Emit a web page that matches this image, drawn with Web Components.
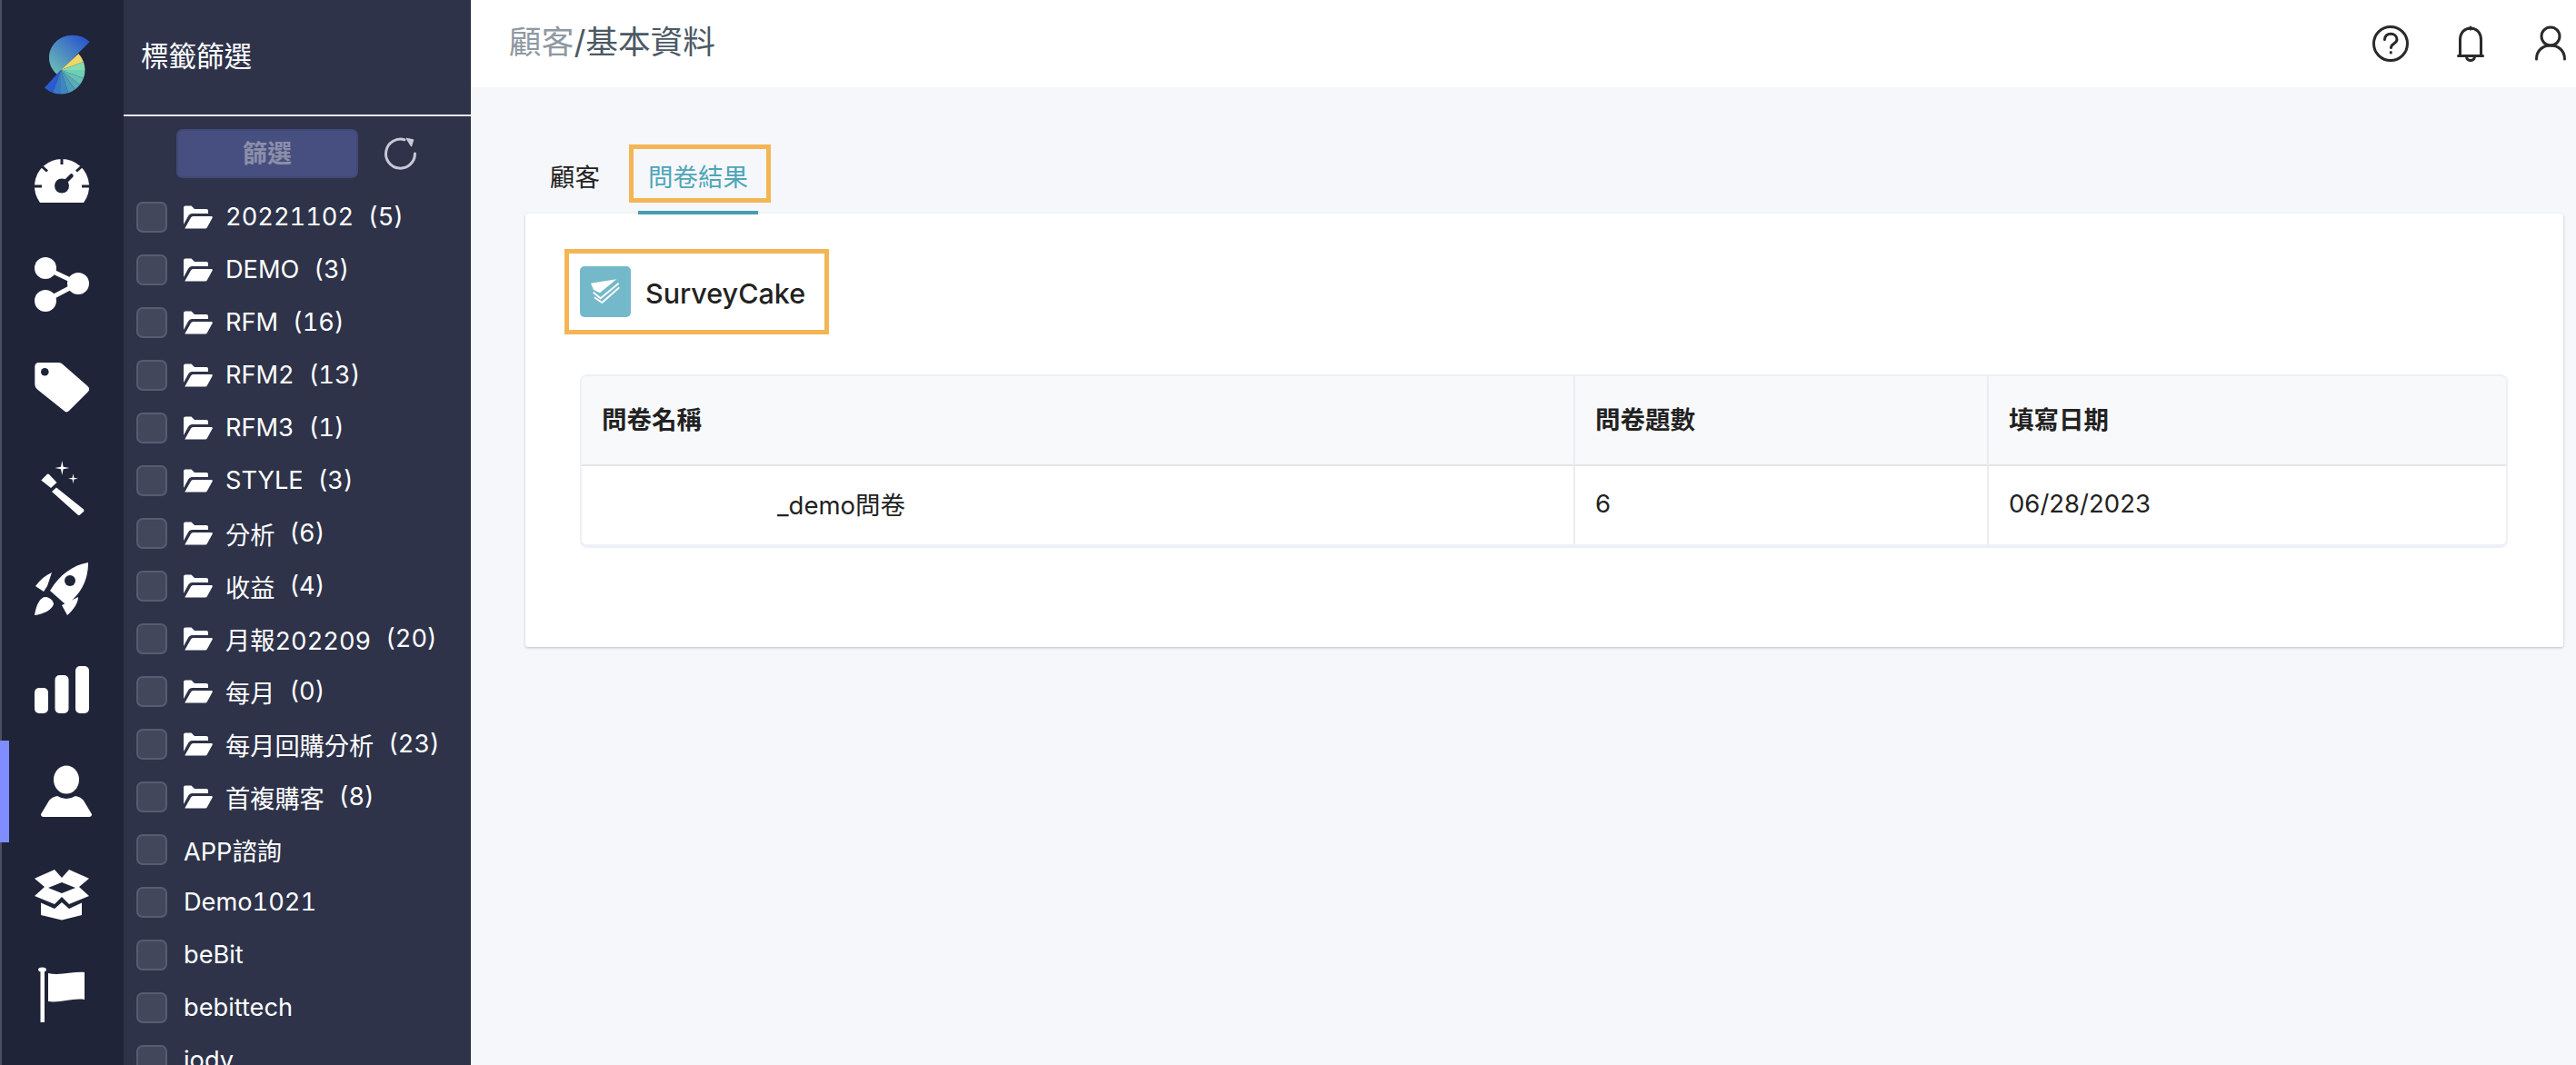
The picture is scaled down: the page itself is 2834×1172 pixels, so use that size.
<!DOCTYPE html>
<html lang="zh-Hant"><head><meta charset="utf-8"><title>基本資料</title>
<style>
html,body{margin:0;height:100%;overflow:hidden}
body{font-family:Inter,"Noto Sans CJK TC",sans-serif;color:#222}
</style></head><body>
<app-shell>
  <side-rail slot="rail">
    <rail-item icon="gauge"></rail-item>
    <rail-item icon="share"></rail-item>
    <rail-item icon="tag"></rail-item>
    <rail-item icon="wand"></rail-item>
    <rail-item icon="rocket"></rail-item>
    <rail-item icon="bars"></rail-item>
    <rail-item icon="user" active></rail-item>
    <rail-item icon="box"></rail-item>
    <rail-item icon="flag"></rail-item>
  </side-rail>
  <tag-panel slot="panel">
    <tag-row folder count="5">20221102</tag-row>
    <tag-row folder count="3">DEMO</tag-row>
    <tag-row folder count="16">RFM</tag-row>
    <tag-row folder count="13">RFM2</tag-row>
    <tag-row folder count="1">RFM3</tag-row>
    <tag-row folder count="3">STYLE</tag-row>
    <tag-row folder count="6">分析</tag-row>
    <tag-row folder count="4">收益</tag-row>
    <tag-row folder count="20">月報202209</tag-row>
    <tag-row folder count="0">每月</tag-row>
    <tag-row folder count="23">每月回購分析</tag-row>
    <tag-row folder count="8">首複購客</tag-row>
    <tag-row>APP諮詢</tag-row>
    <tag-row>Demo1021</tag-row>
    <tag-row>beBit</tag-row>
    <tag-row>bebittech</tag-row>
    <tag-row>jody</tag-row>
  </tag-panel>
  <top-bar slot="top"></top-bar>
  <tab-strip slot="main"></tab-strip>
  <survey-card slot="main"></survey-card>
</app-shell>
<script>
function reg(name, html, setup){
  customElements.define(name, class extends HTMLElement{
    constructor(){super();this.attachShadow({mode:'open'}).innerHTML=html;}
    connectedCallback(){ if(setup) setup(this); }
  });
}
reg('app-shell',`<style>
:host{display:flex;height:1172px;width:2834px;overflow:hidden;background:#f6f7fb}
.main{flex:1;min-width:0;display:flex;flex-direction:column}
</style><slot name="rail"></slot><slot name="panel"></slot><div class="main"><slot name="top"></slot><slot name="main"></slot></div>`);

function wedge(a0,a1,c){
  const r=26.5,cx=67,cy=77,p=a=>[(cx+r*Math.cos(a*Math.PI/180)).toFixed(2),(cy+r*Math.sin(a*Math.PI/180)).toFixed(2)];
  const s=p(a0),e=p(a1);
  return `<path d="M${cx} ${cy}L${s[0]} ${s[1]}A${r} ${r} 0 0 1 ${e[0]} ${e[1]}Z" fill="${c}"/>`;
}
const fan=[[-43,-20,'#f0d76c'],[-20,0,'#84dcb0'],[0,20,'#6fcfb5'],[20,38,'#66c0b6'],[38,54,'#5aacb9'],[54,72,'#4d9dbd'],[72,90,'#3f88bf'],[90,110,'#3a78c6'],[110,133,'#2b5bd0']].map(w=>wedge(...w)).join('');
reg('side-rail',`<style>
:host{display:block;box-sizing:border-box;width:136px;flex:none;height:100%;background:#1f2439;border-left:2px solid #4b5064}
.logo{height:143px;display:block}
svg{display:block}
</style><div class="logo"><svg width="134" height="143" viewBox="2 0 134 143">
<defs><linearGradient id="g" x1="92" y1="42" x2="58" y2="80" gradientUnits="userSpaceOnUse"><stop offset="0" stop-color="#2b58cc"/><stop offset="1" stop-color="#6dbcb6"/></linearGradient></defs>
<path d="M98.7 46A27 27 0 0 0 80 38.7C64 38.700 54 51 54 63.500C54 71 57.500 77 62.600 81.700Z" fill="url(#g)"/>${fan}
</svg></div><slot></slot>`);

const W='#fff',D='#1f2439';
const icons={
gauge:[143,`<path d="M44 223A30 30 0 1 1 92 223Z" fill="${W}"/>
<g stroke="${D}" stroke-width="3"><path d="M68 174V181M46.500 183.500L52 188.500M89.500 183.500L84 188.500M37 205H46M90 205H99"/></g>
<circle cx="68" cy="204.500" r="8" fill="${D}"/><path d="M70 202L78.500 193.500" stroke="${D}" stroke-width="4.500" stroke-linecap="round"/>`],
share:[255,`<path d="M50 295L86 312L50 331" fill="none" stroke="${W}" stroke-width="5"/><circle cx="50" cy="295" r="12" fill="${W}"/><circle cx="86" cy="312" r="12" fill="${W}"/><circle cx="50" cy="331" r="12" fill="${W}"/>`],
tag:[367,`<path d="M43 399H65Q67 399 68.500 400.500L96.500 425Q99.500 428 97 431L76 452Q73.500 454.500 71 452.500L41 428.500Q38.300 426 38.300 423V404Q38.300 399 43 399Z" fill="${W}"/><circle cx="49.300" cy="409.300" r="4.300" fill="${D}"/>`],
wand:[479,`<path d="M57 541L62 536.500L92 560.500Q93 562 92 563L88 566.500Q86.500 567.500 85.500 566.500Z" fill="${W}"/><path d="M45.300 528.500L52 521.700Q53 521 54 522L62.500 531L56 537Z" fill="${W}"/>
<path d="M68.300 507L69.600 513.700L76.300 515L69.600 516.300L68.300 523L67 516.300L60.300 515L67 513.700Z" fill="${W}"/><path d="M80.500 521.200L81.400 525.800L86 526.700L81.400 527.600L80.500 532.200L79.600 527.600L75 526.700L79.600 525.800Z" fill="${W}"/>`],
rocket:[591,`<path d="M97 619C97 640 88 654 73 666L55 650C66 632 80 622 97 619Z" fill="${W}"/><circle cx="77" cy="639" r="6" fill="${D}"/>
<path d="M39 645C44 638 50 633 57 630L52 645L48 651Z" fill="${W}"/><path d="M86 657C86 664 80 672 74 677L68 666Z" fill="${W}"/><path d="M38 677C40 664 45 656 51 657C56 658 59 662 59 665C57 671 48 676 38 677Z" fill="${W}"/>`],
bars:[703,`<rect x="38" y="757" width="15" height="28" rx="5" fill="${W}"/><rect x="60.500" y="743" width="15" height="42" rx="5" fill="${W}"/><rect x="83" y="733" width="15" height="52" rx="5" fill="${W}"/>`],
user:[815,`<ellipse cx="73" cy="858" rx="14" ry="15.500" fill="${W}"/><path d="M45 896L54 881Q57 877 63 876Q73 882 83 876Q89 877 92 881L101 896Q101 899 98 899H48Q45 899 45 896Z" fill="${W}"/>`],
box:[927,`<path d="M38 966.700L60 957L68 966L76 957L98 966.700L87 976L98 986L76 995L68 987L60 995L38 986L49 976Z" fill="${W}"/><path d="M53 977L68 971L83 977L68 983Z" fill="${D}"/><path d="M45 993.500L60 1000L68 993L76 1000L90 993.500V1007L68 1012.500L45 1007Z" fill="${W}"/>`],
flag:[1039,`<rect x="44.500" y="1067" width="4.500" height="58" fill="${W}"/><ellipse cx="46.500" cy="1067" rx="4.500" ry="2.500" fill="${W}"/><path d="M53 1071C66 1074 80 1069 93 1070V1100C80 1098 66 1104 53 1102Z" fill="${W}"/>`]
};
reg('rail-item',`<style>
:host{display:block;height:112px;position:relative}
:host([active])::before{content:"";position:absolute;left:-2px;top:0;width:10px;height:112px;background:#7f8dff}
svg{display:block}
</style><svg width="134" height="112"></svg>`,el=>{
  const i=icons[el.getAttribute('icon')],s=el.shadowRoot.querySelector('svg');
  s.setAttribute('viewBox',`2 ${i[0]} 134 112`);s.innerHTML=i[1];
});
reg('tag-panel',`<style>
:host{display:block;box-sizing:border-box;width:382px;flex:none;height:100%;overflow:hidden;background:#2e334a;color:#fff}
header{border-bottom:2px solid #e6e6ea;display:flex;align-items:center;padding-left:19px;font-size:30.500px;line-height:1;padding-bottom:2px;height:124px}
.act{height:82px;box-sizing:border-box;padding:14px 0 0 58px;display:flex;align-items:flex-start;gap:27px}
button{all:unset;box-sizing:border-box;width:200px;height:54px;background:#474e80;border:2px solid #424976;border-radius:7px;color:#8b8fa9;font:700 27px/52px Inter,"Noto Sans CJK TC",sans-serif;text-align:center}
svg{display:block;margin-top:6px}
</style><header>標籤篩選</header><div class="act"><button>篩選</button>
<svg width="40" height="42" viewBox="420 148 40 42"><path d="M455.500 169A16 16 0 1 1 444 153.800" fill="none" stroke="#c6c9d6" stroke-width="3" stroke-linecap="round"/><path d="M446.500 152.500L453.500 154L451.500 160.500Z" fill="#c6c9d6" stroke="#c6c9d6" stroke-width="1.500" stroke-linejoin="round"/></svg></div><slot></slot>`);
reg('tag-row',`<style>
:host{display:flex;align-items:center;height:58px;padding-left:14px;font-size:27.200px;color:#fff;white-space:nowrap;font-variant-numeric:tabular-nums}
.cb{box-sizing:border-box;width:34px;height:34px;border:2px solid #575c72;background:#42475c;border-radius:7px;flex:none;margin-right:18px}
svg{display:none;margin-right:14px;flex:none}
slot{display:block;padding-bottom:1px}
.c{display:none;margin-left:16px;padding-bottom:1px}
:host([folder]) svg{display:block}
:host([folder]) .c{display:inline}
</style><span class="cb"></span><svg width="32" height="26" viewBox="0 0 32 26"><path d="M0 2.500Q0 .500 2 .500H8.500L12 4H25Q27 4 27 6V9H9Q6.500 9 5.200 11.500L0 21Z" fill="#fff"/><path d="M1.500 25L8 13.500Q8.800 12 10.500 12H30.500Q32.500 12 31.500 14L26 24Q25.500 25.500 23.500 25.500H2.500Q1 25.500 1.500 25Z" fill="#fff"/></svg><slot></slot><span class="c"></span>`,el=>{
  el.shadowRoot.querySelector('.c').textContent='('+(el.getAttribute('count')||'')+')';
});
reg('top-bar',`<style>
:host{display:flex;align-items:center;flex:none;height:96px;background:#fff;padding:0 11px 0 42px;box-sizing:border-box}
.bc{font-size:35.700px;line-height:1;color:#4b5965;padding-bottom:2px}
.bc span{color:#8f99a3}
.ic{margin-left:auto;display:flex;gap:53px}
.ic svg{display:block}
.ic svg+svg+svg{margin-left:3px}
g,path,circle{fill:none;stroke:#2a2a2a;stroke-width:3;stroke-linecap:round}
</style><div class="bc"><span>顧客</span>/基本資料</div><div class="ic">
<svg width="40" height="48" viewBox="2610 23 40 48"><circle cx="2630" cy="47" r="18.500"/><path d="M2623.500 42.500C2623.500 34 2637 34.500 2637 42.500C2637 47 2630.500 47 2630.500 51.500"/><path d="M2630.300 56.500V57" stroke-width="3.500"/></svg>
<svg width="30" height="48" viewBox="2703 23 30 48"><path d="M2704.500 60.500H2731.500M2706.500 60V43C2706.500 25.500 2729.500 25.500 2729.500 43V60M2718 29V31M2713.500 61C2713.500 67 2722.500 67 2722.500 61"/></svg>
<svg width="34" height="48" viewBox="2789 23 34 48"><circle cx="2806" cy="39" r="10"/><path d="M2790.500 64C2790.500 44 2821.500 44 2821.500 64"/></svg>
</div>`);
reg('tab-strip',`<style>
:host{display:flex;flex:none;gap:31px;margin:76px 0 -1px 60px;padding-left:16px;position:relative;z-index:1;font-size:27.500px}
.t{box-sizing:border-box;height:64px;padding:0 11px;line-height:46px;position:relative}
.on{color:#4ea5b8;border-bottom:4px solid #479cae}
.hl{position:absolute;left:-10px;top:-13px;width:156px;height:64px;box-sizing:border-box;border:5px solid #f4b555}
</style><div class="t">顧客</div><div class="t on">問卷結果<div class="hl"></div></div>`);
reg('survey-card',`<style>
:host{display:block;box-sizing:border-box;height:477px;margin:0 14px 0 60px;background:#fff;border-radius:3px;box-shadow:0 1px 3px rgba(40,45,80,.28);padding:39px 61px 0 60px}
.brand{box-sizing:border-box;display:flex;align-items:center;gap:16px;width:291px;height:94px;margin-left:-17px;border:5px solid #f4b555;padding:2px 0 0 12px;font-size:30.500px;font-weight:500;color:#222}
.brand svg{display:block;flex:none;margin-top:-2px}
.tb{margin-top:44px;height:191px;box-sizing:border-box;border:2px solid #edf0f8;border-bottom-width:4px;border-radius:8px;overflow:hidden;display:grid;grid-template-columns:1091px 455px 1fr;grid-template-rows:99px 1fr;font-size:27.500px}
.c{display:flex;align-items:center;padding:0 0 4px 22px;border-left:2px solid #ebecef}
.h{background:#f8f9fb;font-weight:600;border-bottom:2px solid #e3e4e6;padding-bottom:5px}
.c:nth-child(3n+1){border-left:0}
.n{padding-left:193px}
</style><div class="brand"><svg width="56" height="56" viewBox="0 0 56 56"><rect width="56" height="56" rx="5" fill="#74b9c9"/><path d="M12 18.700L40.300 14.300L22 29.300L15 26Z" fill="#fff"/><path d="M14.700 28.700L22.700 35.300L42.700 18.700M16 34.300L24.300 40L43.300 23.300" fill="none" stroke="#fff" stroke-width="1.800"/></svg>SurveyCake</div>
<div class="tb"><div class="c h">問卷名稱</div><div class="c h">問卷題數</div><div class="c h">填寫日期</div><div class="c"><span class="n">_demo問卷</span></div><div class="c">6</div><div class="c">06/28/2023</div></div>`);
</script></body></html>
